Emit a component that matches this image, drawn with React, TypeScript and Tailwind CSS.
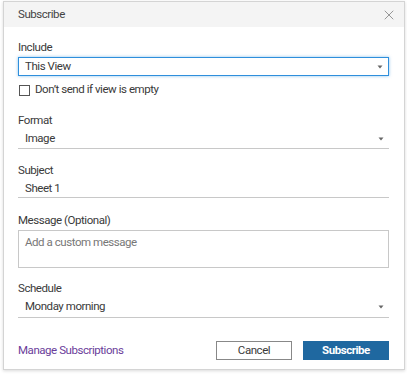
import { X } from 'lucide-react'

function Caret() {
  return (
    <svg width="6" height="4" viewBox="0 0 6 4" className="shrink-0">
      <path d="M0.5 0.5 L5.5 0.5 L3 3.5 Z" fill="#666" />
    </svg>
  )
}

function Label({ children }: { children: React.ReactNode }) {
  return <div className="h-4 leading-4 text-[#3a3a3a]">{children}</div>
}

function LineSelect({ value, className }: { value: string; className?: string }) {
  return (
    <div
      className={`flex items-center justify-between border-b border-[#c8c8c8] pl-[7px] pr-[5px] text-[#3a3a3a] ${className ?? ''}`}
    >
      <span>{value}</span>
      <Caret />
    </div>
  )
}

export default function App() {
  return (
    <div className="h-[374px] w-[407px] bg-white pl-[3px] pt-[1px] font-['Roboto',sans-serif] text-[11.5px] tracking-[-0.45px]">
      <div className="flex h-[369px] w-[402px] flex-col border border-[#d4d4d4] bg-white shadow-[0_1px_3px_rgba(0,0,0,0.15)]">
        <div className="flex h-[25px] shrink-0 items-center justify-between bg-[#f4f4f4] pl-[14px] pr-[7px] text-[#444]">
          <span>Subscribe</span>
          <X className="h-[16px] w-[16px] text-[#666]" strokeWidth={1} />
        </div>

        <div className="flex flex-col pl-[14px] pr-[15px]">
          <div className="mt-[12px]">
            <Label>Include</Label>
          </div>
          <div className="mt-[2px] flex h-[19px] items-center justify-between border border-[#2f8fdc] pl-[6px] pr-[5px] text-[#3a3a3a] shadow-[0_0_3px_rgba(47,143,220,0.55)]">
            <span>This View</span>
            <Caret />
          </div>

          <label className="mt-[6px] flex h-4 items-center gap-[5px] text-[#3a3a3a]">
            <span className="ml-[1px] h-[11px] w-[11px] border border-[#555] bg-white" />
            <span>Don’t send if view is empty</span>
          </label>

          <div className="mt-[14px]">
            <Label>Format</Label>
          </div>
          <LineSelect value="Image" className="mt-[1px] h-[20px]" />

          <div className="mt-[13px]">
            <Label>Subject</Label>
          </div>
          <div className="h-[20px] border-b border-[#c8c8c8] pl-[7px] leading-[20px] text-[#3a3a3a]">
            Sheet 1
          </div>

          <div className="mt-[14px]">
            <Label>Message (Optional)</Label>
          </div>
          <div className="mt-[2px] h-[38px] border border-[#c8c8c8] px-[6px] pt-[3px] leading-4 text-[#777]">
            Add a custom message
          </div>

          <div className="mt-[12px]">
            <Label>Schedule</Label>
          </div>
          <LineSelect value="Monday morning" className="mt-[1px] h-[21px]" />

          <div className="mt-[23px] flex h-[19px] items-center justify-between">
            <a className="text-[#6a3d9a]">Manage Subscriptions</a>
            <div className="flex gap-[11px]">
              <button className="h-[19px] w-[76px] border border-[#888] bg-white text-[#3a3a3a]">
                Cancel
              </button>
              <button className="h-[19px] w-[86px] bg-[#1f68a0] font-bold text-white">
                Subscribe
              </button>
            </div>
          </div>
        </div>
      </div>
    </div>
  )
}
